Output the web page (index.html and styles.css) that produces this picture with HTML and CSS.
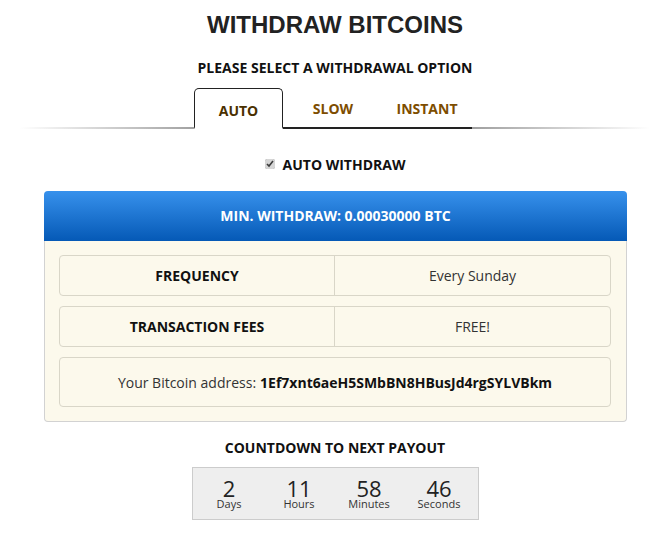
FILE: index.html
```html
<!DOCTYPE html>
<html lang="en">
<head>
    <meta charset="UTF-8">
    <meta name="viewport" content="width=device-width, initial-scale=1.0">
    <title>Withdraw Bitcoins</title>
    <link rel="stylesheet" href="styles.css">
</head>
<body>
    <div class="page">
        <h1>WITHDRAW BITCOINS</h1>
        <h2 class="subtitle">PLEASE SELECT A WITHDRAWAL OPTION</h2>

        <div class="tabs">
            <ul class="tab-list">
                <li class="tab active">AUTO</li>
                <li class="tab">SLOW</li>
                <li class="tab">INSTANT</li>
            </ul>
        </div>

        <label class="auto-check">
            <input type="checkbox" checked>
            AUTO WITHDRAW
        </label>

        <div class="panel">
            <div class="panel-head">MIN. WITHDRAW: 0.00030000 BTC</div>
            <div class="panel-body">
                <div class="row">
                    <div class="cell label">FREQUENCY</div>
                    <div class="cell">Every Sunday</div>
                </div>
                <div class="row">
                    <div class="cell label">TRANSACTION FEES</div>
                    <div class="cell">FREE!</div>
                </div>
                <div class="row single">
                    <div class="cell">Your Bitcoin address: <b>1Ef7xnt6aeH5SMbBN8HBusJd4rgSYLVBkm</b></div>
                </div>
            </div>
        </div>

        <h3 class="countdown-title">COUNTDOWN TO NEXT PAYOUT</h3>
        <div class="countdown">
            <div class="unit"><span class="num">2</span><span class="name">Days</span></div>
            <div class="unit"><span class="num">11</span><span class="name">Hours</span></div>
            <div class="unit"><span class="num">58</span><span class="name">Minutes</span></div>
            <div class="unit"><span class="num">46</span><span class="name">Seconds</span></div>
        </div>
    </div>
</body>
</html>
```

FILE: styles.css
```css
body {
    margin: 0;
    font-family: "Open Sans", sans-serif;
    color: #222;
    background: #fff;
}

.page {
    width: 670px;
}

h1 {
    margin: 10px 0 0;
    font-family: "Liberation Sans", Arial, sans-serif;
    font-size: 24px;
    line-height: 30px;
    text-align: center;
    color: #222;
}

.subtitle {
    margin: 18px 0 0;
    font-size: 14px;
    line-height: 19px;
    text-align: center;
    color: #111;
}

.tabs {
    position: relative;
    margin-top: 11px;
    height: 41px;
}

.tabs::before {
    content: "";
    position: absolute;
    left: 20px;
    right: 20px;
    top: 39px;
    height: 2px;
    background: linear-gradient(to right, rgba(120,120,120,0), #777 40%, #777 60%, rgba(120,120,120,0));
}

.tab-list {
    position: relative;
    display: flex;
    justify-content: center;
    margin: 0;
    padding: 0 4px 0 0;
    list-style: none;
}

.tab {
    box-sizing: border-box;
    height: 41px;
    padding-top: 11px;
    font-size: 14px;
    font-weight: bold;
    text-align: center;
    color: #7d4d00;
    background: #fff;
    border-bottom: 2px solid #222;
}

.tab:nth-child(2) {
    width: 97px;
    padding-left: 3px;
}

.tab:nth-child(3) {
    width: 92px;
    padding-left: 2px;
}

.tab.active {
    width: 89px;
    padding-top: 12px;
    color: #4a3000;
    border: 1px solid #222;
    border-bottom: 2px solid #fff;
    border-radius: 5px 5px 0 0;
}

.auto-check {
    display: flex;
    align-items: center;
    justify-content: center;
    gap: 4px;
    margin-top: 26px;
    font-size: 14px;
    font-weight: bold;
    line-height: 20px;
    color: #111;
}

.auto-check input {
    width: 10px;
    height: 10px;
    margin: 0 4px 2px 0;
    accent-color: #d6d6d6;
}

.panel {
    margin: 16px 43px 0 44px;
}

.panel-head {
    height: 50px;
    line-height: 50px;
    text-align: center;
    font-size: 14px;
    font-weight: bold;
    color: #fff;
    background: linear-gradient(to bottom, #3791ec, #0559b6);
    border-radius: 4px 4px 0 0;
}

.panel-body {
    display: flex;
    flex-direction: column;
    gap: 10px;
    padding: 14px 15px 14px 14px;
    background: #fcf9ec;
    border: 1px solid #d2d2d2;
    border-top: none;
    border-radius: 0 0 4px 4px;
}

.row {
    display: grid;
    grid-template-columns: 1fr 1fr;
    height: 41px;
    box-sizing: border-box;
    border: 1px solid #d9d6c8;
    border-radius: 4px;
}

.row.single {
    grid-template-columns: 1fr;
    height: 50px;
}

.cell {
    display: flex;
    align-items: center;
    justify-content: center;
    font-size: 14px;
    color: #333;
}

.cell.label {
    font-weight: bold;
    color: #111;
    border-right: 1px solid #d9d6c8;
}

.cell b {
    margin-left: 4px;
    color: #111;
}

.countdown-title {
    margin: 16px 0 0;
    font-size: 14px;
    line-height: 19px;
    text-align: center;
    color: #111;
}

.countdown {
    display: grid;
    grid-template-columns: repeat(4, 70px);
    width: 287px;
    height: 53px;
    box-sizing: border-box;
    margin: 10px 0 0 192px;
    padding: 10px 6px 0 1px;
    background: #eee;
    border: 1px solid #ccc;
}

.unit {
    display: flex;
    flex-direction: column;
    align-items: center;
}

.num {
    font-size: 22px;
    line-height: 20px;
    color: #222;
}

.name {
    font-size: 11px;
    line-height: 11px;
    color: #333;
}
```
